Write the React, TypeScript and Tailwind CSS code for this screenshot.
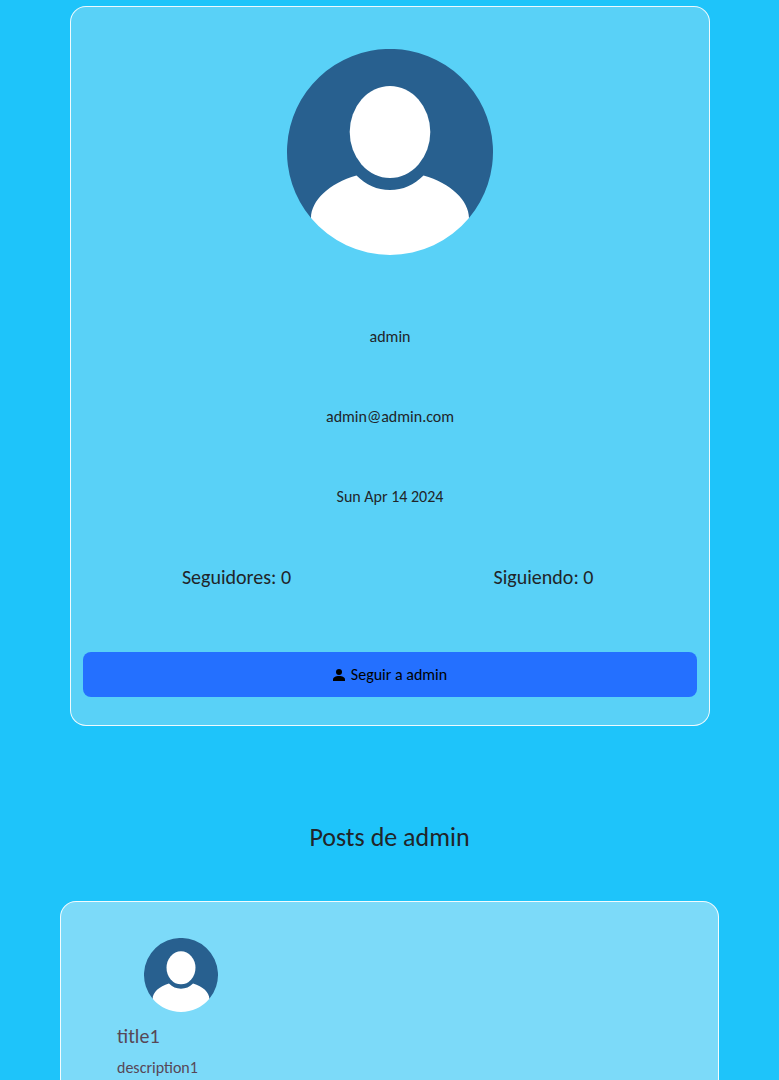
function Avatar({ className }: { className: string }) {
  return (
    <svg viewBox="0 0 206 206" className={className} role="img" aria-label="Avatar">
      <path d="M24 169A103 103 0 1 1 182 169L150 180H56Z" fill="#28608f" />
      <ellipse cx="103" cy="83" rx="40.3" ry="46" fill="#fff" />
      <path
        d="M24 169C24 152 42 134 69.5 126.500C79 136 90 141 103 141S127 136 136.500 126.500C164 134 182 152 182 169A103 103 0 0 1 24 169Z"
        fill="#fff"
      />
    </svg>
  );
}

function PersonIcon() {
  return (
    <svg viewBox="0 0 12 12" className="size-3" fill="currentColor" aria-hidden="true">
      <circle cx="6" cy="3" r="3" />
      <path d="M0 12V10.500C0 8.300 2.500 7 6 7S12 8.300 12 10.500V12Z" />
    </svg>
  );
}

const details = ["admin", "admin@admin.com", "Sun Apr 14 2024"];

export default function App() {
  return (
    <div className="min-h-screen bg-[#1ec4fa] px-[60px] pt-[6px] font-[Carlito,Lato,sans-serif] text-[16px] leading-6 font-light text-[#212529]">
      <main>
        <section className="mr-[9px] ml-[10px] rounded-[16px] border border-white/90 bg-[#59d1f7] px-3 pt-[42px] pb-7">
          <Avatar className="mx-auto size-[206px]" />
          <div className="mt-[70px] flex flex-col gap-14 text-center">
            {details.map((text) => (
              <p key={text}>{text}</p>
            ))}
          </div>
          <div className="mt-14 grid grid-cols-2 text-center text-[20px] font-normal">
            <h2>Seguidores: 0</h2>
            <h2>Siguiendo: 0</h2>
          </div>
          <button
            type="button"
            className="mt-[63px] flex h-[45px] w-full items-center justify-center gap-[6px] rounded-[8px] bg-[#2470ff] text-black"
          >
            <PersonIcon />
            Seguir a admin
          </button>
        </section>
        <h1 className="mt-[95px] text-center text-[26px] leading-8 font-normal">Posts de admin</h1>
        <article className="mt-12 rounded-[16px] border border-white/90 bg-[#7cdaf9] px-14 pt-9 pb-16 text-[#574756]">
          <Avatar className="ml-[27px] size-[74px]" />
          <h2 className="mt-3 text-[20px] font-normal">title1</h2>
          <p className="mt-2">description1</p>
        </article>
      </main>
    </div>
  );
}
